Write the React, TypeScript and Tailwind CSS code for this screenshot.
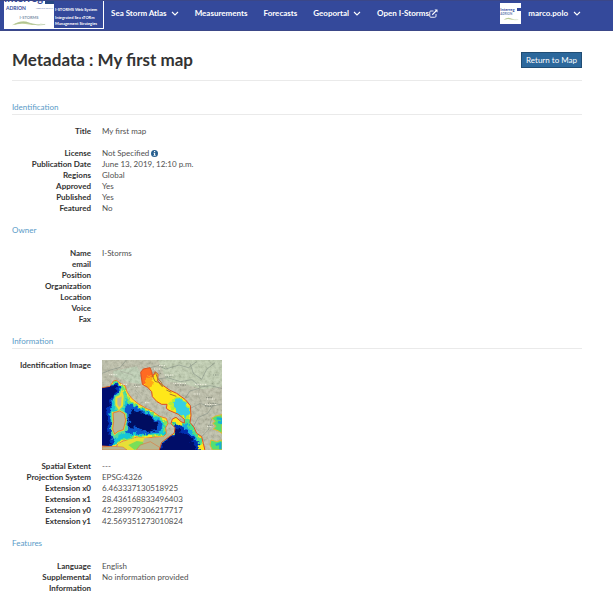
import React from "react";

type Row = { label: string; value?: React.ReactNode; gapAfter?: boolean };

function Chevron() {
  return (
    <svg viewBox="0 0 8 5" className="h-[5px] w-2" fill="none" stroke="currentColor" strokeWidth="1.1">
      <path d="M1 1l3 3 3-3" />
    </svg>
  );
}

function InfoIcon() {
  return (
    <svg viewBox="0 0 14 14" className="ml-0.5 h-[7px] w-[7px]">
      <circle cx="7" cy="7" r="7" fill="#286090" />
      <path d="M6 2h2.4v2H6zM5 5.4h3.4v4.4h1V11.4H5V9.8h1V7H5z" fill="#fff" />
    </svg>
  );
}

function ExternalIcon() {
  return (
    <svg viewBox="0 0 18 18" className="h-[9px] w-[9px]" fill="none" stroke="currentColor" strokeWidth="1.8">
      <path d="M9 4H3.5Q1.500 4 1.500 6v8.500Q1.500 16.500 3.500 16.500h8Q14 16.500 14 14.500V10" />
      <path d="M6.500 11.500L15 3" strokeWidth="2.200" />
      <path d="M11 1h6v6z" fill="currentColor" stroke="none" />
    </svg>
  );
}

function Swoosh({ className }: { className: string }) {
  return (
    <svg viewBox="0 0 40 8" preserveAspectRatio="none" className={className}>
      <path d="M1 6Q12-1 20 3T36 3Q30 7 20 5T1 6z" fill="#c3d09c" />
      <path d="M4 5Q14 1 22 4T38 5" fill="none" stroke="#a3bb8c" strokeWidth=".7" />
    </svg>
  );
}

function Logo() {
  return (
    <a href="#home" className="flex h-7 w-[100px] shrink-0 items-end overflow-hidden border-r border-b border-white text-white">
      <span className="flex h-7 w-[50px] shrink-0 flex-col overflow-hidden bg-white whitespace-nowrap text-[#34499b]">
        <span className="flex h-1 items-end justify-between">
          <span className="text-[11px] leading-[13px] font-bold">Interreg</span>
          <span className="h-[3px] w-[9px] bg-[#294a85]" />
        </span>
        <span className="flex items-center justify-between pt-px pr-px pl-0.5 text-[5px] leading-[6px]">
          ADRION <span className="text-[2px] text-[#7788b5]">ADRIATIC-IONIAN</span>
        </span>
        <span className="pt-1 text-center text-[4px] leading-[5px] text-[#7d91a9]">I-STORMS</span>
        <Swoosh className="mx-auto h-[7px] w-9" />
      </span>
      <span className="flex h-7 flex-col whitespace-nowrap pl-px text-[4px] leading-[6px] font-bold">
        <span className="pt-[7px]">I-STORMS Web System</span>
        <span className="pt-0.5">Integrated Sea sTORm</span>
        <span>Management Strategies</span>
      </span>
    </a>
  );
}

function Avatar() {
  return (
    <span className="flex h-[21px] w-[21px] flex-col items-center bg-white pt-1">
      <span className="flex w-full items-center justify-between text-[4px] leading-[5px] font-bold text-[#34499b]">
        Interreg <span className="h-[3px] w-1 bg-[#34499b]" />
      </span>
      <span className="w-full text-left text-[3px] leading-[4px] text-[#6679b0]">ADRION</span>
      <Swoosh className="mt-px h-1 w-4" />
    </span>
  );
}

const WEST =
  "M10 100L45 94 55 78 64 76 75 84 90 92 97 112 110 130 128 145 150 158 172 168 194 184 214 190 219 205 212 218 214 236 204 246 180 246 150 250 124 246 105 256 84 258 68 268 62 276 10 272z";
const ADRIATIC =
  "M137 52L145 42 165 38 170 50 173 64 181 50 189 58 188 78 205 92 225 106 245 115 270 133 286 152 288 182 285 202 297 217 305 235 320 245 325 265 332 295 190 295 200 262 222 246 238 234 240 218 228 206 232 192 243 187 258 200 268 204 268 193 250 178 222 166 214 160 216 148 200 148 186 140 172 125 170 110 158 97 142 88z";

function MapThumbnail() {
  return (
    <svg role="img" aria-label="Identification Image" viewBox="21 15 360 270" className="h-[90px] w-[120px]">
      <defs>
        <filter id="terrain" x="0" y="0" width="100%" height="100%">
          <feTurbulence type="fractalNoise" baseFrequency=".1" numOctaves="4" seed="7" />
          <feColorMatrix values="1.600 0 0 0 -.2  1.600 0 0 0 -.2  1.600 0 0 0 -.2  0 0 0 0 .2" />
        </filter>
        <filter id="rough" x="-10%" y="-10%" width="120%" height="120%">
          <feTurbulence type="fractalNoise" baseFrequency=".07" numOctaves="3" seed="3" result="n" />
          <feDisplacementMap in="SourceGraphic" in2="n" scale="24" xChannelSelector="R" yChannelSelector="G" />
          <feGaussianBlur stdDeviation="2" />
        </filter>
        <clipPath id="west"><path d={WEST} /></clipPath>
        <clipPath id="adriatic"><path d={ADRIATIC} /></clipPath>
      </defs>
      <rect x="21" y="15" width="360" height="270" fill="#b8baa2" />
      <path d="M190 15h191v80l-60 8-60-18-45-5z" fill="#bccbab" />
      <path d="M55 48l70-14 12 20 4 34-40-6-46-20z" fill="#b8cbad" />
      <rect x="21" y="15" width="360" height="270" filter="url(#terrain)" />
      <g fill="none" stroke="#7f8a80" strokeWidth="1.600">
        <path d="M21 55l25-10 30-8 18-22M165 38l25-6 22 10 40-12 28 8 25-18M188 72l30-4 38 12 35-6 25 22 30-4 40 10M270 130l15-22 28-8M286 160l30-15 25 10 40-8M295 215l15-28 28-12 20-30M285 25l10 30 25 18 15-30 25-20M320 245l20-20 10-34" />
        <path d="M75 48l38 12M120 105l20 22M315 88l-5 35 10 20" stroke="#9b9f90" />
      </g>
      <g clipPath="url(#west)">
        <rect x="10" y="15" width="231" height="270" fill="#f5e72c" />
        <g filter="url(#rough)">
          <path d="M-20 90L62 80 88 96 95 126 114 142 142 158 182 176 216 198 214 240 150 244 105 250 78 258 48 275-20 275z" fill="#72e568" />
          <path d="M-20 92L68 85 87 108 96 140 130 156 172 176 209 200 208 237 150 239 102 244 74 255 35 290-20 290z" fill="#16c7d5" />
          <path d="M-20 92L72 86 74 111 56 128 46 155 47 200 50 236 58 254 35 300-20 300z" fill="#0634bd" />
          <path d="M96 145L130 158 172 182 204 208 192 230 158 238 126 232 105 238 88 222 90 185z" fill="#0b58cf" />
          <path d="M-20 94L66 90 67 110 48 130 37 160 38 225 48 250 30 300-20 300z" fill="#020d72" />
          <path d="M103 166L150 174 190 205 184 224 157 231 132 220 102 216z" fill="#030b60" />
        </g>
        <g filter="url(#rough)" fill="#e8ef35" stroke="#5bdc9a" strokeWidth="14">
          <path d="M65 132l12-5 4-12 3 12-2 29-9 9-8-12z" />
          <path d="M55 178l20-6 14 8 4 20-7 28-16 5-10 8-6-15 3-22z" />
        </g>
      </g>
      <path d={WEST} fill="none" stroke="#ee6a25" strokeWidth="2.500" />
      <g stroke="#f0e030" strokeWidth="6" fill="#b9b79c">
        <path d="M64 128l12-5 4-12 3 12-2 29-9 9-8-12z" />
        <path d="M54 174l20-6 14 8 4 20-7 28-16 5-10 8-6-15 3-22z" />
        <path d="M54 174l20-6 14 8 4 20-7 28-16 5-10 8-6-15 3-22z" stroke="#e05a28" strokeWidth="2" />
      </g>
      <path d="M69 266l38-14 23-5 34 4 6 11 30 17 3 8H69z" fill="#e7df37" />
      <path d="M100 270l25-12 28 4-12 13-22 10z" fill="#79df58" />
      <path d="M148 250l40-2 22-4 6-10 14 10-18 22-13 20h-20l-22-14-14-8z" fill="#b8b68f" />
      <path d="M124 285l12-15 30-10 28 17 5 8zM21 276l35-2 28 2 12 9H21z" fill="#b8b68f" stroke="#e86b2b" strokeWidth="1.500" />
      <g clipPath="url(#adriatic)">
        <rect x="130" y="30" width="210" height="260" fill="#ffe719" />
        <g filter="url(#rough)">
          <path d="M130 30l48 5-2 30-17 9-8 18-22-8z" fill="#ff6b22" />
          <path d="M150 68l20-8 4 26-16 18-10-12z" fill="#ffa818" />
          <path d="M220 145l24-20 28 12 15 25-4 30-25-6-27-25z" fill="#b3ef37" />
          <path d="M231 145l18-16 24 14 10 29-12 17-32-23z" fill="#35cfe4" />
          <path d="M268 190l18 2 15 34 18 24-10 42-130 5 15-38 34-23 5-38 24 12z" fill="#4be08b" />
          <path d="M267 201l20 23 24 33-2 35H180l18-32 32-16 10-38 24 7z" fill="#17a9e3" />
          <path d="M237 206l26 4 22 26 27 30-2 30H186l15-34 27-18z" fill="#052fae" />
          <path d="M240 218l27 12 30 35 8 34H190l16-37 25-15z" fill="#020a67" />
        </g>
      </g>
      <path d={ADRIATIC} fill="none" stroke="#dc4e24" strokeWidth="3" />
      <path d="M172 62l8 17 10 3 12 13-2-12-12-13-8-20M214 105l15 7M224 117l20 7" fill="none" stroke="#a67a32" strokeWidth="3" />
      <path d="M350 190l12-7 19-4v56l-12-8-14-5 8-8-10-9 8-6zM348 255l17 5 16-5v30h-29l-7-15z" fill="#54df72" stroke="#e6b831" strokeWidth="3" />
      <path d="M365 190l16 2v12l-12-3M362 270l14-5v18" fill="none" stroke="#16afd5" strokeWidth="7" />
      <g fill="none" stroke="#f4f3e5" strokeWidth="3" strokeDasharray="3 2">
        <path d="M43 59h22M78 88h20M118 95h20M210 60h26M235 85h40M300 88h36M336 132h24M330 148h36M296 117h20M177 42h18M150 143h14M336 214h15M192 32h18" />
      </g>
      <g fill="none" stroke="#47514a" strokeWidth="2" strokeDasharray="2 3">
        <path d="M212 65h20M240 90h35M334 128h20M340 145h28M330 153h20M118 90h15M340 211h12M355 60h16" />
      </g>
    </svg>
  );
}

function NavItem({ children, menu }: { children: React.ReactNode; menu?: boolean }) {
  return menu ? (
    <button type="button" className="flex items-center gap-1 whitespace-nowrap">
      {children}
      <Chevron />
    </button>
  ) : (
    <a href="#page" className="flex items-center whitespace-nowrap">{children}</a>
  );
}

function Section({ title, rows, ruled = false }: { title: string; rows: Row[]; ruled?: boolean }) {
  return (
    <section className="mb-[11px] last:mb-0">
      <h2 className={`text-[8px] leading-[11px] text-[#5a9bc8] ${ruled ? "border-b border-[#eaeaea] pb-px" : "pb-px"}`}>
        {title}
      </h2>
      <dl className="pt-[11px] text-[8px] leading-[11px]">
        {rows.map((row) => (
          <div key={row.label} className={`flex gap-[11px] ${row.gapAfter ? "mb-[11px]" : ""}`}>
            <dt className="w-[79px] shrink-0 text-right font-bold">{row.label}</dt>
            <dd className="flex items-center self-start text-[#505050]">{row.value}</dd>
          </div>
        ))}
      </dl>
    </section>
  );
}

const identification: Row[] = [
  { label: "Title", value: "My first map", gapAfter: true },
  { label: "License", value: <>Not Specified<InfoIcon /></> },
  { label: "Publication Date", value: "June 13, 2019, 12:10 p.m." },
  { label: "Regions", value: "Global" },
  { label: "Approved", value: "Yes" },
  { label: "Published", value: "Yes" },
  { label: "Featured", value: "No" },
];

const owner: Row[] = [
  { label: "Name", value: "I-Storms" },
  { label: "email" },
  { label: "Position" },
  { label: "Organization" },
  { label: "Location" },
  { label: "Voice" },
  { label: "Fax" },
];

const information: Row[] = [
  { label: "Identification Image", value: <MapThumbnail />, gapAfter: true },
  { label: "Spatial Extent", value: "---" },
  { label: "Projection System", value: "EPSG:4326" },
  { label: "Extension x0", value: "6.463337130518925" },
  { label: "Extension x1", value: "28.436168833496403" },
  { label: "Extension y0", value: "42.289979306217717" },
  { label: "Extension y1", value: "42.569351273010824" },
];

const features: Row[] = [
  { label: "Language", value: "English" },
  { label: "Supplemental Information", value: "No information provided" },
];

export default function App() {
  return (
    <div className="min-h-screen bg-white font-['Lato','Liberation_Sans',sans-serif] text-[#333]">
      <header className="flex h-[31px] items-start border-y border-[#3b4788] bg-[#34499b] pl-1 text-[8px] leading-[11px] font-bold text-white">
        <Logo />
        <nav className="flex gap-4 pt-[7px] pl-[7px]">
          <NavItem menu>Sea Storm Atlas</NavItem>
          <NavItem>Measurements</NavItem>
          <NavItem>Forecasts</NavItem>
          <NavItem menu>Geoportal</NavItem>
          <NavItem>Open I-Storms<ExternalIcon /></NavItem>
        </nav>
        <button type="button" className="mt-0.5 mr-8 ml-auto flex items-center">
          <Avatar />
          <span className="pr-[5px] pl-[7px]">marco.polo</span>
          <Chevron />
        </button>
      </header>
      <main className="mr-[31px] ml-3 pt-[21px]">
        <div className="mb-[21px] flex items-start justify-between border-b border-[#eaeaea] pb-3">
          <h1 className="text-[17px] leading-4 font-bold">Metadata : My first map</h1>
          <button type="button" className="h-4 border border-[#204d74] bg-[#2c689c] px-1 text-[8px] leading-[14px] text-white">
            Return to Map
          </button>
        </div>
        <Section title="Identification" rows={identification} ruled />
        <Section title="Owner" rows={owner} />
        <Section title="Information" rows={information} ruled />
        <Section title="Features" rows={features} />
      </main>
    </div>
  );
}
